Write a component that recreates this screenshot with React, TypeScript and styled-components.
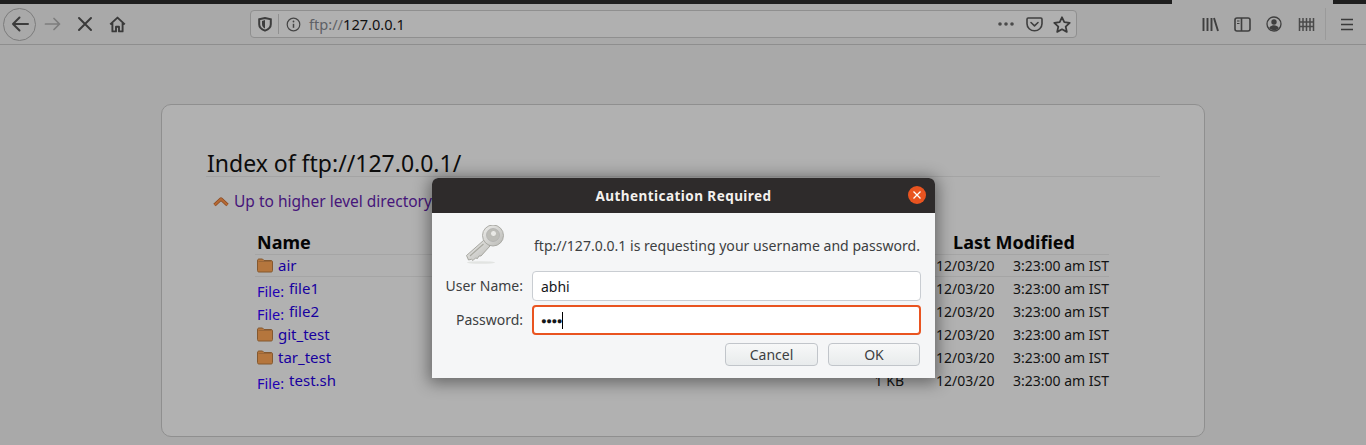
import styled, { createGlobalStyle } from 'styled-components';

const GlobalStyle = createGlobalStyle`
  html, body {
    margin: 0;
    padding: 0;
    height: 445px;
    overflow: hidden;
    background: #a9a9a9;
    font-family: "Noto Sans", "Open Sans", sans-serif;
  }
`;

const Screen = styled.div`
  position: relative;
  width: 1366px;
  height: 445px;
  overflow: hidden;
`;

const TopStripe = styled.div`
  display: grid;
  grid-template-columns: 1172px 161px 1fr;
  height: 4px;
  background: #a9a9a9;
`;

const StripePart = styled.div`
  background: #1e1e1e;
`;

const Toolbar = styled.div`
  display: flex;
  align-items: center;
  height: 41px;
  box-sizing: border-box;
  border-bottom: 1px solid #8e8e8e;
  background: #a9a9a9;
  padding-left: 3px;
`;

const BackButton = styled.div`
  display: flex;
  align-items: center;
  justify-content: center;
  flex: none;
  width: 33px;
  height: 33px;
  box-sizing: border-box;
  border: 1px solid #7c7c7c;
  border-radius: 50%;
  margin-right: 1px;
`;

const NavButton = styled.div`
  display: flex;
  align-items: center;
  justify-content: center;
  flex: none;
  width: 32px;
  height: 32px;
`;

const UrlBar = styled.div`
  display: flex;
  align-items: center;
  flex: none;
  width: 827px;
  height: 28px;
  margin-left: 117px;
  box-sizing: border-box;
  border: 1px solid #8f8f8f;
  border-radius: 4px;
  background: #b0b0b0;
  padding: 0 0 0 7px;
`;

const UrlDivider = styled.div`
  width: 1px;
  height: 20px;
  background: #909090;
  margin: 0 7px 0 6px;
`;

const UrlText = styled.span`
  font-size: 14.6px;
  color: #5e6166;
  margin-left: 8px;
  flex: 1;
`;

const UrlHost = styled.span`
  color: #111;
`;

const UrlAction = styled.div`
  display: flex;
  align-items: center;
  justify-content: center;
  width: 28px;
  height: 24px;
`;

const ToolGroup = styled.div`
  display: flex;
  align-items: center;
  flex: none;
  margin-left: 117px;
`;

const ToolButton = styled.div`
  display: flex;
  align-items: center;
  justify-content: center;
  width: 32px;
  height: 32px;
`;

const ToolDivider = styled.div`
  width: 1px;
  height: 32px;
  background: #9a9a9a;
  margin: 0 0 0 3px;
`;

const BurgerButton = styled(ToolButton)`
  margin-left: 5px;
`;

const Panel = styled.main`
  width: 1044px;
  height: 333px;
  box-sizing: border-box;
  margin: 59px auto 0;
  padding: 0 44px;
  border: 1px solid #8f8f8f;
  border-radius: 10px;
  background: #b1b1b1;
`;

const Title = styled.h1`
  margin: 43px 0 0;
  height: 28px;
  font-size: 23px;
  line-height: 30px;
  font-weight: 400;
  text-indent: 1px;
  color: #0c0c0c;
  border-bottom: 1px solid #a4a4a4;
`;

const UpLink = styled.a`
  display: flex;
  align-items: center;
  gap: 5px;
  height: 24px;
  margin: 12px 0 0 7px;
  font-size: 15.5px;
  color: #46157a;
`;

const Listing = styled.table`
  table-layout: fixed;
  width: 854px;
  margin: 17px 0 0 49px;
  border-collapse: separate;
  border-spacing: 0;
  font-size: 14px;
  color: #131313;
`;

const HeadCell = styled.th<{ $center?: boolean }>`
  height: 24px;
  padding: 0 2px;
  font-size: 18px;
  line-height: 24px;
  font-weight: 700;
  color: #050505;
  text-align: ${p => (p.$center ? 'center' : 'left')};
`;

const Cell = styled.td<{ $hover?: boolean }>`
  height: 23px;
  padding: 0 2px;
  line-height: 21px;
  white-space: nowrap;
  box-sizing: border-box;
  border-top: 1px solid ${p => (p.$hover ? '#a5a5a5' : 'transparent')};
  border-bottom: 1px solid ${p => (p.$hover ? '#a5a5a5' : 'transparent')};
`;

const NameInner = styled.span`
  display: flex;
  align-items: center;
  gap: 5px;
  height: 21px;
  font-size: 15px;
  color: #17009f;
`;

const FileTag = styled.span`
  font-size: 14.5px;
  line-height: 16px;
  position: relative;
  top: 2px;
  color: #2200b4;
`;

const SizeCell = styled(Cell)`
  text-align: right;
  padding-right: 15px;
`;

const DateCell = styled(Cell)`
  padding-left: 17px;
`;

const TimeCell = styled(Cell)`
  padding-left: 14px;
`;

const Dialog = styled.div`
  position: absolute;
  left: 432px;
  top: 178px;
  width: 503px;
  height: 200px;
  background: #f5f6f7;
  border-radius: 6px 6px 0 0;
  box-shadow: 0 2px 16px 3px rgba(0, 0, 0, 0.42);
  display: flex;
  flex-direction: column;
`;

const DialogHeader = styled.header`
  position: relative;
  display: flex;
  align-items: center;
  justify-content: center;
  height: 35px;
  flex: none;
  background: #2e2b2b;
  border-radius: 6px 6px 0 0;
  color: #f4f1ee;
  font-size: 13.5px;
  font-weight: 700;
  letter-spacing: 0.45px;
`;

const CloseButton = styled.div`
  position: absolute;
  right: 9px;
  top: 8px;
  width: 18px;
  height: 18px;
  border-radius: 50%;
  background: #e95420;
  display: flex;
  align-items: center;
  justify-content: center;
`;

const DialogBody = styled.div`
  display: flex;
  flex-direction: column;
  padding: 11px 15px 0 0;
`;

const Message = styled.div`
  display: flex;
  align-items: center;
  height: 42px;
  margin-bottom: 5px;
  font-size: 14.07px;
  color: #3d3f42;
`;

const KeyBox = styled.div`
  display: flex;
  justify-content: flex-start;
  width: 102px;
  padding-left: 33px;
  box-sizing: border-box;
`;

const Form = styled.div`
  display: grid;
  grid-template-columns: 91px 389px;
  column-gap: 9px;
  row-gap: 4px;
`;

const FieldLabel = styled.label`
  font-size: 14px;
  line-height: 30px;
  text-align: right;
  color: #3d3f42;
`;

const Field = styled.div<{ $focus?: boolean }>`
  display: flex;
  align-items: center;
  height: 30px;
  box-sizing: border-box;
  padding-left: ${p => (p.$focus ? '7px' : '8px')};
  border: ${p => (p.$focus ? '2px solid #e95420' : '1px solid #c9cdd2')};
  border-radius: 4px;
  background: #fff;
  font-size: 14px;
  color: #15171a;
`;

const Dots = styled.span`
  font-size: 9.5px;
  letter-spacing: -0.5px;
  color: #15171a;
`;

const Caret = styled.span`
  display: inline-block;
  width: 1px;
  height: 17px;
  background: #000;
`;

const ButtonRow = styled.div`
  display: flex;
  justify-content: flex-end;
  gap: 10px;
  margin-top: 8px;
`;

const DialogButton = styled.button<{ $w: number }>`
  width: ${p => p.$w}px;
  height: 23px;
  padding: 0;
  box-sizing: border-box;
  border: 1px solid #c1c5ca;
  border-radius: 4px;
  background: linear-gradient(#f7f8f8, #e8ebec);
  font-family: inherit;
  font-size: 14px;
  line-height: 20px;
  color: #3d3f42;
`;

const Back = () => (
  <svg width="22" height="22" viewBox="0 0 22 22" fill="none" stroke="#3c3c3c" strokeWidth="2" strokeLinecap="round" strokeLinejoin="round">
    <path d="M19 11H4M10.5 4.5 4 11l6.5 6.5" />
  </svg>
);

const Forward = () => (
  <svg width="18" height="18" viewBox="0 0 18 18" fill="none" stroke="#7d7d7d" strokeWidth="1.7" strokeLinecap="round" strokeLinejoin="round">
    <path d="M1.5 9h14M10 3.5 15.5 9 10 14.5" />
  </svg>
);

const Stop = () => (
  <svg width="16" height="16" viewBox="0 0 16 16" fill="none" stroke="#3a3a3a" strokeWidth="2" strokeLinecap="round">
    <path d="M2 2l12 12M14 2 2 14" />
  </svg>
);

const Home = () => (
  <svg width="17" height="17" viewBox="0 0 17 17" fill="none" stroke="#3a3a3a" strokeWidth="1.9" strokeLinejoin="round">
    <path d="M1.2 8.4 8.5 1.6l7.3 6.8M3.4 7v8.4h3.6v-4.6h3v4.6h3.600V7" />
  </svg>
);

const Shield = () => (
  <svg width="14" height="15" viewBox="0 0 14 15" fill="none" stroke="#3d3d3d" strokeWidth="2">
    <path d="M1.200 2.200 7 1l5.800 1.200v5c0 3-2.600 5.200-5.800 6.400C3.800 12.400 1.200 10.200 1.200 7.200z" />
    <path d="M7 3v8.500C5 10.600 4 9.200 4 7V4z" fill="#3d3d3d" stroke="none" />
  </svg>
);

const Info = () => (
  <svg width="15" height="15" viewBox="0 0 15 15" fill="none" stroke="#454545" strokeWidth="1.200">
    <circle cx="7.500" cy="7.500" r="6.300" />
    <path d="M7.500 6.800v4" strokeWidth="1.500" />
    <circle cx="7.500" cy="4.500" r="0.900" fill="#454545" stroke="none" />
  </svg>
);

const More = () => (
  <svg width="18" height="6" viewBox="0 0 18 6" fill="#4a4a4a">
    <circle cx="3" cy="3" r="1.800" />
    <circle cx="9" cy="3" r="1.800" />
    <circle cx="15" cy="3" r="1.800" />
  </svg>
);

const Pocket = () => (
  <svg width="17" height="15" viewBox="0 0 17 15" fill="none" stroke="#3f3f3f" strokeWidth="1.600" strokeLinecap="round" strokeLinejoin="round">
    <path d="M1 2.200C1 1.500 1.500 1 2.200 1h12.600c.7 0 1.200.5 1.200 1.200v4.600c0 3.800-3.400 7-7.500 7S1 10.600 1 6.800z" />
    <path d="M5 5.500l3.500 3.300L12 5.500" />
  </svg>
);

const Star = () => (
  <svg width="18" height="17" viewBox="0 0 18 17" fill="none" stroke="#3a3a3a" strokeWidth="1.800" strokeLinejoin="round">
    <path d="M9 1.300l2.300 4.900 5.400.7-4 3.700 1.100 5.300L9 13.300l-4.800 2.600 1.100-5.300-4-3.700 5.400-.7z" />
  </svg>
);

const Library = () => (
  <svg width="17" height="15" viewBox="0 0 17 15" fill="none" stroke="#3f3f3f" strokeWidth="1.900">
    <path d="M1.500 1v13M5.500 1v13M9.500 1v13M12 1l4 13" />
  </svg>
);

const Sidebar = () => (
  <svg width="17" height="15" viewBox="0 0 17 15" fill="none" stroke="#3f3f3f" strokeWidth="1.600">
    <rect x="1" y="1" width="15" height="13" rx="2" />
    <path d="M7.500 1v13" />
    <path d="M3 4h2.500M3 6.500h2.500" strokeWidth="1.200" />
  </svg>
);

const Account = () => (
  <svg width="16" height="16" viewBox="0 0 16 16" fill="none" stroke="#3f3f3f" strokeWidth="1.300">
    <circle cx="8" cy="8" r="7" />
    <circle cx="8" cy="6" r="2.700" fill="#3f3f3f" stroke="none" />
    <path d="M3.200 12c1-2 2.800-2.800 4.800-2.800s3.800.8 4.800 2.800C11.600 13.600 9.800 14.300 8 14.300S4.400 13.600 3.200 12z" fill="#3f3f3f" stroke="none" />
  </svg>
);

const Synced = () => (
  <svg width="17" height="15" viewBox="0 0 17 15" fill="none" stroke="#4a4a4a" strokeWidth="1.500">
    <path d="M1.500 1v13M5 1v13M8.500 1v13M12 1v13M15.500 1v13" />
    <path d="M1 5h15M1 9.500h15" strokeWidth="1.300" />
  </svg>
);

const Burger = () => (
  <svg width="14" height="13" viewBox="0 0 14 13" fill="none" stroke="#3a3a3a" strokeWidth="1.700">
    <path d="M1 1.500h12M1 6.500h12M1 11.500h12" />
  </svg>
);

const UpArrow = () => (
  <svg width="16" height="11" viewBox="0 0 16 11" fill="none" strokeLinejoin="round">
    <path d="M1.500 9 8 3l6.500 6" stroke="#8a4a22" strokeWidth="3.400" />
    <path d="M1.500 9 8 3l6.500 6" stroke="#b66a35" strokeWidth="1.800" />
  </svg>
);

const Folder = () => (
  <svg width="16" height="15" viewBox="0 0 16 15">
    <path d="M.5 3C.5 1.500 1.200 1 2 1h3.500L7 2.500h7c1 0 1.500.6 1.500 1.500v8.500c0 1-.6 1.500-1.500 1.500H2c-.9 0-1.500-.5-1.500-1.500z" fill="#b5763d" stroke="#84582f" />
    <path d="M1.500 3.500h13" stroke="#9a6637" fill="none" />
  </svg>
);

const KeyIcon = () => (
  <svg width="40" height="40" viewBox="0 0 40 40">
    <defs>
      <linearGradient id="keyMetal" x1="0" y1="0" x2="1" y2="1">
        <stop offset="0" stopColor="#eeeeec" />
        <stop offset="1" stopColor="#b9b9b5" />
      </linearGradient>
    </defs>
    <ellipse cx="16" cy="37.500" rx="14" ry="1.300" fill="#e2e4e2" />
    <path d="M19 15 1.500 30.500 3.500 35 6.500 34.300 8 35.500 10.500 33 12.500 33.500 14 31 16 31 25 21z" fill="url(#keyMetal)" stroke="#97978f" strokeWidth="0.800" strokeLinejoin="round" />
    <circle cx="28" cy="10.500" r="10.500" fill="url(#keyMetal)" stroke="#a3a39d" strokeWidth="0.900" />
    <circle cx="28" cy="10" r="6.500" fill="#bdbdb8" stroke="#aaa" strokeWidth="0.600" />
    <circle cx="28.500" cy="8.500" r="3" fill="#e9e9e6" stroke="#a8a8a2" strokeWidth="0.600" />
    <path d="M5 31 18.500 19" stroke="#a8a8a0" strokeWidth="1.100" fill="none" />
  </svg>
);

const rows = [
  { name: 'air', dir: true, size: '', hover: true },
  { name: 'file1', size: '' },
  { name: 'file2', size: '' },
  { name: 'git_test', dir: true, size: '' },
  { name: 'tar_test', dir: true, size: '' },
  { name: 'test.sh', size: '1 KB' },
];

export default function App() {
  return (
    <Screen>
      <GlobalStyle />
      <TopStripe>
        <StripePart />
        <div />
        <StripePart />
      </TopStripe>
      <Toolbar>
        <BackButton><Back /></BackButton>
        <NavButton><Forward /></NavButton>
        <NavButton><Stop /></NavButton>
        <NavButton><Home /></NavButton>
        <UrlBar>
          <Shield />
          <UrlDivider />
          <Info />
          <UrlText>ftp://<UrlHost>127.0.0.1</UrlHost></UrlText>
          <UrlAction><More /></UrlAction>
          <UrlAction><Pocket /></UrlAction>
          <UrlAction><Star /></UrlAction>
        </UrlBar>
        <ToolGroup>
          <ToolButton><Library /></ToolButton>
          <ToolButton><Sidebar /></ToolButton>
          <ToolButton><Account /></ToolButton>
          <ToolButton><Synced /></ToolButton>
          <ToolDivider />
          <BurgerButton><Burger /></BurgerButton>
        </ToolGroup>
      </Toolbar>
      <Panel>
        <Title>Index of ftp://127.0.0.1/</Title>
        <UpLink><UpArrow />Up to higher level directory</UpLink>
        <Listing>
          <colgroup>
            <col style={{ width: 604 }} />
            <col style={{ width: 60 }} />
            <col style={{ width: 80 }} />
            <col style={{ width: 110 }} />
          </colgroup>
          <thead>
            <tr>
              <HeadCell>Name</HeadCell>
              <HeadCell />
              <HeadCell colSpan={2} $center>Last Modified</HeadCell>
            </tr>
          </thead>
          <tbody>
            {rows.map(r => (
              <tr key={r.name}>
                <Cell $hover={r.hover}>
                  <NameInner>
                    {r.dir ? <Folder /> : <FileTag>File:</FileTag>}
                    {r.name}
                  </NameInner>
                </Cell>
                <SizeCell $hover={r.hover}>{r.size}</SizeCell>
                <DateCell $hover={r.hover}>12/03/20</DateCell>
                <TimeCell $hover={r.hover}>3:23:00 am IST</TimeCell>
              </tr>
            ))}
          </tbody>
        </Listing>
      </Panel>
      <Dialog>
        <DialogHeader>
          Authentication Required
          <CloseButton>
            <svg width="10" height="10" viewBox="0 0 10 10" fill="none" stroke="#fff" strokeWidth="1.300">
              <path d="M1.500 1.500l7 7M8.500 1.500l-7 7" />
            </svg>
          </CloseButton>
        </DialogHeader>
        <DialogBody>
          <Message>
            <KeyBox><KeyIcon /></KeyBox>
            ftp://127.0.0.1 is requesting your username and password.
          </Message>
          <Form>
            <FieldLabel>User Name:</FieldLabel>
            <Field>abhi</Field>
            <FieldLabel>Password:</FieldLabel>
            <Field $focus><Dots>●●●●</Dots><Caret /></Field>
          </Form>
          <ButtonRow>
            <DialogButton $w={93}>Cancel</DialogButton>
            <DialogButton $w={92}>OK</DialogButton>
          </ButtonRow>
        </DialogBody>
      </Dialog>
    </Screen>
  );
}
